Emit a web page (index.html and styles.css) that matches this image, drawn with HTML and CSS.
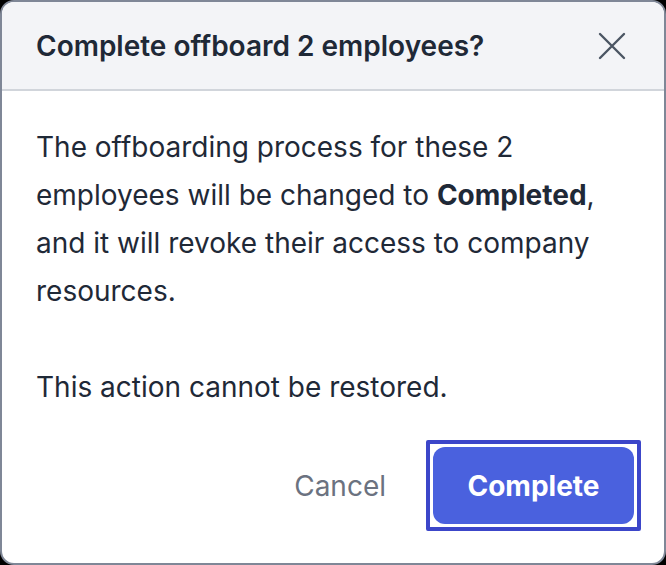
FILE: index.html
```html
<!DOCTYPE html>
<html lang="en">
<head>
<meta charset="utf-8">
<title>Complete offboard</title>
<link rel="stylesheet" href="styles.css">
</head>
<body>
<div class="dialog">
  <div class="dialog-header">
    <h2 class="dialog-title">Complete offboard 2 employees?</h2>
    <button class="close-btn" aria-label="Close">
      <svg width="28" height="28" viewBox="0 0 28 28" fill="none" stroke="#4b5563" stroke-width="2.4" stroke-linecap="round">
        <path d="M2 2 L26 26 M26 2 L2 26"/>
      </svg>
    </button>
  </div>
  <div class="dialog-body">
    <p>The offboarding process for these 2 employees will be changed to <strong>Completed</strong>, and it will revoke their access to company resources.</p>
    <p>This action cannot be restored.</p>
  </div>
  <div class="dialog-footer">
    <button class="btn-cancel">Cancel</button>
    <div class="focus-ring">
      <button class="btn-primary">Complete</button>
    </div>
  </div>
</div>
</body>
</html>
```
FILE: styles.css
```css
html, body {
  margin: 0;
  padding: 0;
  background: #000;
}
body {
  font-family: Inter, "Noto Sans", sans-serif;
}
.dialog {
  box-sizing: border-box;
  width: 666px;
  height: 565px;
  background: #fff;
  border: 2px solid #7f8797;
  border-radius: 14px;
  overflow: hidden;
  display: flex;
  flex-direction: column;
}
.dialog-header {
  height: 87px;
  flex-shrink: 0;
  background: #f3f4f7;
  border-bottom: 2px solid #d1d5db;
  display: flex;
  align-items: center;
  justify-content: space-between;
  padding: 0 38px 0 34px;
}
.dialog-title {
  margin: 0;
  font-size: 28px;
  font-weight: 600;
  color: #1f2937;
}
.close-btn {
  background: none;
  border: 0;
  padding: 0;
  width: 28px;
  height: 28px;
  display: flex;
  cursor: pointer;
}
.dialog-body {
  padding: 32px 34px 0 34px;
  color: #1f2937;
  font-size: 28px;
  line-height: 48px;
}
.dialog-body p {
  margin: 0;
}
.dialog-body p + p {
  margin-top: 48px;
}
.dialog-body strong {
  font-weight: 700;
}
.dialog-footer {
  display: flex;
  justify-content: flex-end;
  align-items: center;
  gap: 40px;
  padding: 29px 23px 0 0;
}
.btn-cancel {
  background: none;
  border: 0;
  padding: 0;
  font-family: inherit;
  font-size: 28px;
  color: #6b7280;
  cursor: pointer;
}
.focus-ring {
  border: 4px solid #3c46c9;
  border-radius: 2px;
  padding: 3px;
  display: flex;
}
.btn-primary {
  width: 201px;
  height: 77px;
  background: #4a61de;
  color: #fff;
  border: 0;
  border-radius: 12px;
  font-family: inherit;
  font-size: 28px;
  font-weight: 700;
  cursor: pointer;
}
```
